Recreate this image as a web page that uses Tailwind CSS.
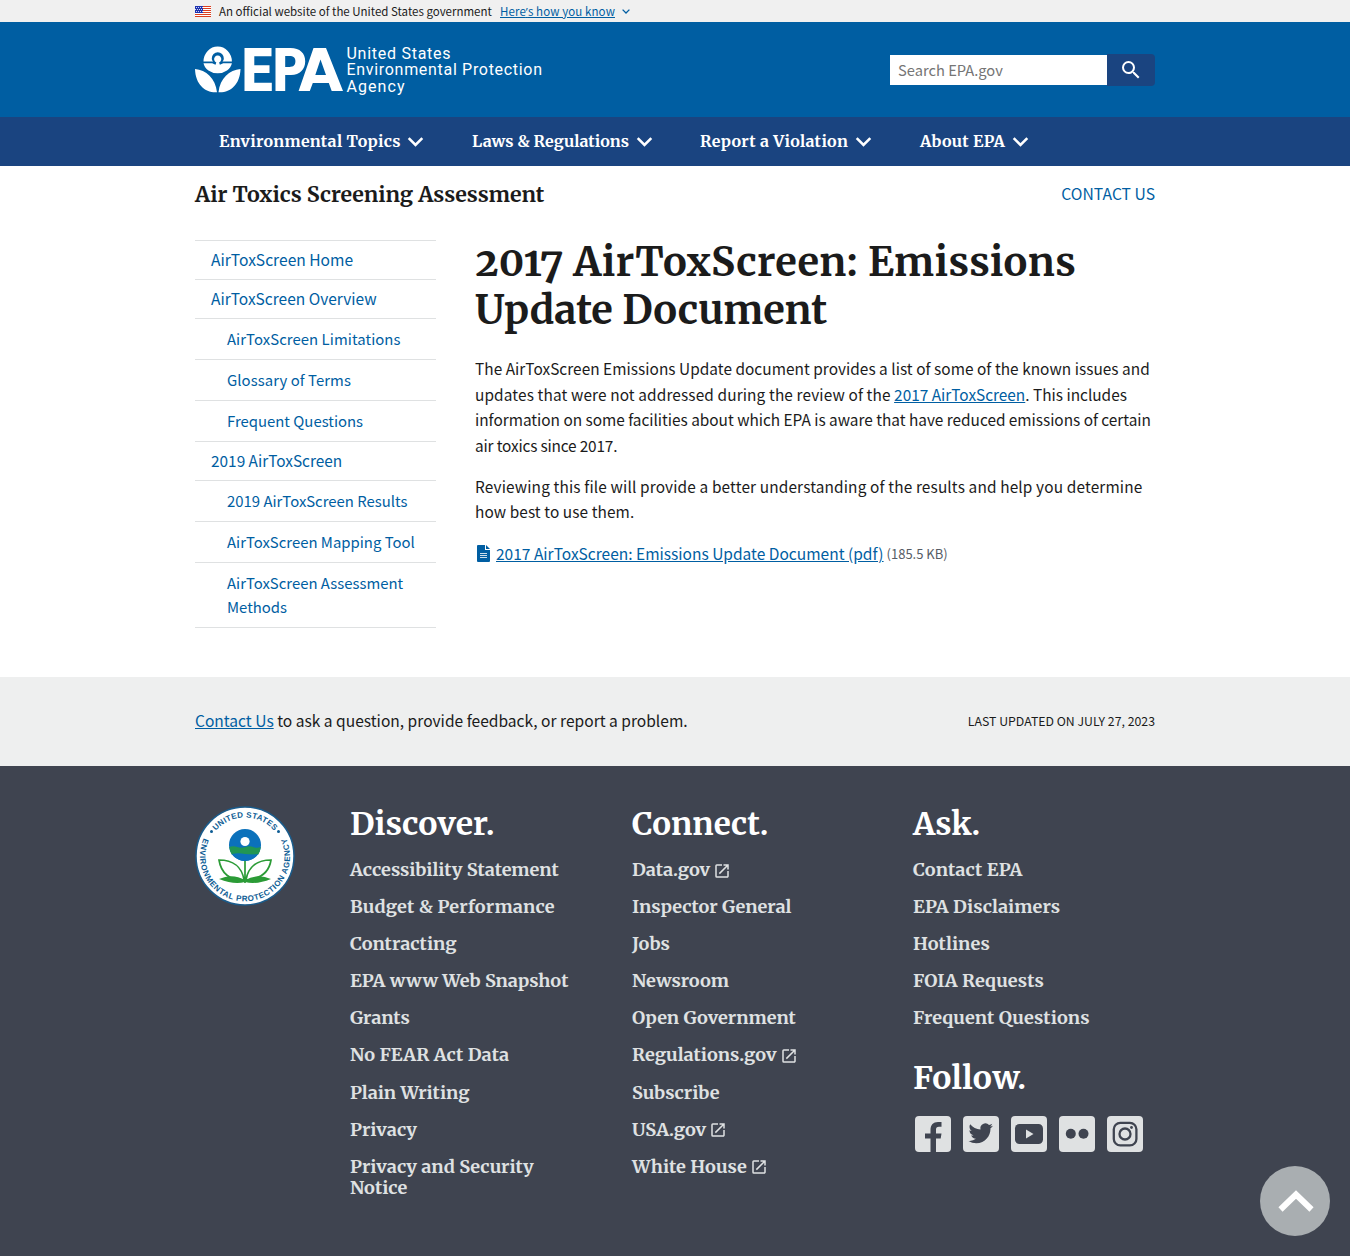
<!DOCTYPE html>
<html lang="en">
<head>
<meta charset="utf-8">
<title>2017 AirToxScreen: Emissions Update Document | US EPA</title>
<script src="https://cdn.jsdelivr.net/npm/@tailwindcss/browser@4"></script>
</head>
<body class="h-[1256px] overflow-hidden bg-white font-['Noto_Sans_CJK_SC','Open_Sans',sans-serif] text-[15.4px] leading-[25.6px] text-[#1b1b1b]">

<svg class="hidden">
  <symbol id="chev" viewBox="0 0 16 10"><path d="M1.2 1.2 8 8l6.800-6.800" fill="none" stroke="currentColor" stroke-width="2.600"/></symbol>
  <symbol id="ext" viewBox="0 0 24 24"><path fill="currentColor" d="M19 19H5V5h7V3H5a2 2 0 0 0-2 2v14a2 2 0 0 0 2 2h14c1.100 0 2-.9 2-2v-7h-2v7zM14 3v2h3.590l-9.830 9.830 1.410 1.410L19 6.410V10h2V3h-7z"/></symbol>
</svg>

<!-- Government banner -->
<div class="h-[22px] bg-[#f0f0f0]">
  <div class="mx-auto flex h-full w-[960px] items-center text-[11.5px] leading-[22px]">
    <svg class="mr-2 h-[11px] w-4" viewBox="0 0 16 11"><path fill="#fff" d="M0 0h16v11H0z"/><path stroke="#db3e1f" d="M0 .5h16M0 2.500h16M0 4.500h16M0 6.500h16M0 8.500h16M0 10.500h16"/><path fill="#1e33b1" d="M0 0h8v7H0z"/><path stroke="#fff" stroke-width=".8" stroke-dasharray="1 1" d="M1 1.500h7M0 3.500h8M1 5.500h7"/></svg>
    <span class="w-[273px] whitespace-nowrap">An official website of the United States government</span>
    <a class="ml-2 w-[116px] whitespace-nowrap tracking-[0.1px] text-[#005ea2] underline underline-offset-1">Here<span class="font-['Open_Sans',sans-serif]">’</span>s how you know</a>
    <svg class="ml-1.5 h-[5px] w-2 text-[#005ea2]"><use href="#chev"/></svg>
  </div>
</div>

<!-- Masthead -->
<header class="h-[95px] bg-[#005ea2]">
  <div class="mx-auto flex h-full w-[960px] items-center justify-between">
    <svg class="h-[54px] w-[350px]" viewBox="0 0 350 54" fill="#fff">
      <path d="M8.500 18.500a14.200 15 0 0 1 28.400 0H27.500c1-1.200 1.300-2 1.300-3.300a6 6 0 0 0-12 0c0 1.300.3 2.100 1.300 3.300z"/>
      <path d="M8.500 20.300h8.700l3.300 1.500.8-2.400a3.600 3.600 0 1 1 2.800 0l.8 2.400 3.300-1.500h8.700a14.400 12 0 0 1-28.400 0z"/>
      <path d="M0 26c11 1 20.500 9 22 23.200C10.500 50 .5 42 0 26zM45.500 26c-11 1-20.500 9-22 23.200 11.500.8 21.500-7.200 22-23.200z"/>
      <path d="M49.500 5h27v8.200H59.300v9h15.200V30H59.300v9.700h17.500V48H49.500z"/>
      <path fill-rule="evenodd" d="M80.500 5h15c9.500 0 14.700 5.300 14.700 13.200 0 8-5.200 13.700-14.200 13.700h-5.800V48h-9.700zm9.700 8v11h4.200c4 0 6-2 6-5.700 0-3.500-2-5.300-6-5.300z"/>
      <path fill-rule="evenodd" d="M118.500 5h12.500l17 43h-11.300l-2.900-8h-16l-3 8h-11.200zm7 11.500-5.200 15.500h10.700z"/>
      <g class="font-['Roboto',sans-serif]" font-size="16"><text x="151.500" y="15.500" textLength="104">United States</text><text x="151.500" y="32" textLength="195.500">Environmental Protection</text><text x="151.500" y="48.500" textLength="58">Agency</text></g>
    </svg>
    <div class="flex items-center">
      <div class="flex h-[30px] w-[217px] items-center bg-white px-2 text-[14.7px] text-[#757575]">Search EPA.gov</div>
      <div class="flex h-8 w-12 items-center justify-center rounded-r-[4px] bg-[#1a4480]">
        <svg class="size-6" viewBox="0 0 24 24"><path fill="#fff" d="M15.500 14h-.79l-.28-.27A6.471 6.471 0 0 0 16 9.500 6.500 6.500 0 1 0 9.500 16c1.610 0 3.090-.59 4.230-1.570l.27.28v.79l5 4.990L20.490 19l-4.990-5zm-6 0C7.010 14 5 11.990 5 9.500S7.010 5 9.500 5 14 7.010 14 9.500 11.990 14 9.500 14z"/></svg>
      </div>
    </div>
  </div>
</header>

<!-- Primary navigation -->
<nav class="h-[49px] bg-[#1a4480]">
  <div class="mx-auto flex h-[47px] w-[960px] items-center pl-6 font-['Merriweather','Noto_Serif',serif] text-base font-bold whitespace-nowrap text-white">
    <a class="flex w-[253px] items-center"><span class="w-[188px] tracking-[0.31px]">Environmental Topics</span><svg class="mt-0.5 h-2.5 w-[17px]"><use href="#chev"/></svg></a>
    <a class="flex w-[228px] items-center"><span class="w-[164px] tracking-[0.05px]">Laws &amp; Regulations</span><svg class="mt-0.5 h-2.5 w-[17px]"><use href="#chev"/></svg></a>
    <a class="flex w-[220px] items-center"><span class="w-[155px] tracking-[0.32px]">Report a Violation</span><svg class="mt-0.5 h-2.5 w-[17px]"><use href="#chev"/></svg></a>
    <a class="flex items-center"><span class="w-[92px] tracking-[0.28px]">About EPA</span><svg class="mt-0.5 h-2.5 w-[17px]"><use href="#chev"/></svg></a>
  </div>
</nav>

<div class="mx-auto flex h-[74px] w-[960px] justify-between pt-[15px]">
  <h2 class="pt-px font-['Merriweather','Noto_Serif',serif] text-[21.35px] leading-[26px] font-bold">Air Toxics Screening Assessment</h2>
  <a class="text-[15.7px] text-[#005ea2]">CONTACT US</a>
</div>

<div class="mx-auto flex h-[437px] w-[960px] gap-[39px]">
  <ul class="w-[241px] border-t border-[#dfe1e2] text-[14.9px] leading-6 whitespace-nowrap text-[#005ea2] *:border-b *:border-[#dfe1e2]">
    <li class="h-[39px] pt-[6px] pl-4 text-[15.6px]">AirToxScreen Home</li>
    <li class="h-[39px] pt-[6px] pl-4 text-[15.5px]">AirToxScreen Overview</li>
    <li class="py-2 pl-8 tracking-[0.06px]">AirToxScreen Limitations</li>
    <li class="py-2 pl-8 tracking-[0.06px]">Glossary of Terms</li>
    <li class="py-2 pl-8">Frequent Questions</li>
    <li class="h-[39px] pt-[6px] pl-4 text-[15.4px]">2019 AirToxScreen</li>
    <li class="py-2 pl-8">2019 AirToxScreen Results</li>
    <li class="py-2 pl-8">AirToxScreen Mapping Tool</li>
    <li class="py-2 pl-8">AirToxScreen Assessment<br>Methods</li>
  </ul>
  <main class="w-[680px] whitespace-nowrap">
    <h1 class="-mt-px font-['Merriweather','Noto_Serif',serif] text-[39.8px] leading-[47.500px] font-bold oldstyle-nums"><span class="tracking-[0.4px]">2017 AirToxScreen: Emissions</span><br><span class="tracking-[-0.05px]">Update Document</span></h1>
    <p class="mt-[22px]"><span class="tracking-[0.035px]">The AirToxScreen Emissions Update document provides a list of some of the known issues and</span><br><span class="tracking-[0.12px]">updates that were not addressed during the review of the</span> <a class="text-[#005ea2] underline underline-offset-1">2017 AirToxScreen</a>. This includes<br><span class="tracking-[-0.02px]">information on some facilities about which EPA is aware that have reduced emissions of certain</span><br><span class="tracking-[-0.17px]">air toxics since 2017.</span></p>
    <p class="mt-[15.500px]"><span class="tracking-[0.14px]">Reviewing this file will provide a better understanding of the results and help you determine</span><br><span class="tracking-[0.08px]">how best to use them.</span></p>
    <p class="mt-[15.500px] flex"><svg class="mt-1 mr-1.5 ml-0.5 h-[17px] w-[13px]" viewBox="0 0 13 17"><path fill="#005ea2" d="M1 0h7v5h5v11a1 1 0 0 1-1 1H1a1 1 0 0 1-1-1V1a1 1 0 0 1 1-1zM9 0l4 4H9z"/><path stroke="#fff" stroke-opacity=".8" d="M3 8.500h7M3 10.500h7M3 12.500h7"/></svg><a class="text-[15.53px] text-[#005ea2] underline underline-offset-1">2017 AirToxScreen: Emissions Update Document (pdf)</a><span class="ml-[3px] text-[13px] text-[#565c65]">(185.5 KB)</span></p>
  </main>
</div>

<div class="h-[89px] bg-[#eeefef]">
  <div class="mx-auto flex h-full w-[960px] items-center justify-between">
    <p class="-mt-0.5 text-[15.57px]"><a class="text-[#005ea2] underline underline-offset-1">Contact Us</a> to ask a question, provide feedback, or report a problem.</p>
    <p class="text-[12.3px]">LAST UPDATED ON JULY 27, 2023</p>
  </div>
</div>

<!-- Footer -->
<footer class="h-[490px] bg-[#3f4450] font-['Merriweather','Noto_Serif',serif] font-bold text-[#dfe1e2]">
  <div class="mx-auto flex w-[960px] pt-10">
    <div class="w-[155px]">
      <svg class="size-[100px]" viewBox="0 0 100 100">
        <circle cx="50" cy="50" r="49" fill="#fff" stroke="#1a5c8c" stroke-width="1.500"/>
        <path id="arcTop" fill="none" d="M11.500 50a38.500 38.500 0 0 1 77 0"/>
        <path id="arcBot" fill="none" d="M9.570 30.500A45 45 0 1 0 90.430 30.500"/>
        <g class="font-['Liberation_Sans',sans-serif]" fill="#0d5c94" font-size="8">
          <text text-anchor="middle" textLength="66"><textPath href="#arcTop" startOffset="50%">UNITED STATES</textPath></text>
          <text text-anchor="middle" textLength="178"><textPath href="#arcBot" startOffset="50%">ENVIRONMENTAL PROTECTION AGENCY</textPath></text>
        </g>
        <circle cx="16.500" cy="25.500" r="1.500" fill="#0d5c94"/><circle cx="83.500" cy="25.500" r="1.500" fill="#0d5c94"/>
        <circle cx="50" cy="39" r="16" fill="#0b71bb"/>
        <path fill="#219653" d="M34.300 41q4-1.500 8 0t8 0 8 0 7.400 0a16 16 0 0 1-2.400 7.500H36.700A16 16 0 0 1 34.300 41z"/>
        <path fill="#0b71bb" d="M36.800 48q6.500-1.500 13 0t13.400 0a16 16 0 0 1-26.400 0z"/>
        <circle cx="50" cy="35.500" r="4.600" fill="#fff"/>
        <g fill="none" stroke="#2b9b36" stroke-width="1.700"><path d="M50 55v22M49 74C35 75 26 67 24 54c14 0 23 7 25 20zM51 74c14-1 23-7 25-20-14 0-23 7-25 20z"/></g>
        <path fill="#2b9b36" d="M24 73q14-6 26 1.500Q62 67 76 73q-15 6-26 3-11 3-26-3z"/>
      </svg>
    </div>
    <div class="w-[282px]">
      <h3 class="text-[32.1px] leading-9 text-white">Discover.</h3>
      <ul class="mt-[17px] space-y-4 text-[18.1px] leading-[21.1px] *:whitespace-nowrap">
        <li>Accessibility Statement</li><li class="tracking-[0.17px]">Budget &amp; Performance</li><li>Contracting</li><li>EPA www Web Snapshot</li><li>Grants</li><li class="tracking-[0.1px]">No FEAR Act Data</li><li>Plain Writing</li><li>Privacy</li><li>Privacy and Security<br>Notice</li>
      </ul>
    </div>
    <div class="w-[281px]">
      <h3 class="text-[31.4px] leading-9 text-white">Connect.</h3>
      <ul class="mt-[17px] space-y-4 text-[18.1px] leading-[21.1px] *:flex *:items-center *:gap-[3px]">
        <li>Data.gov <svg class="mt-0.5 size-[18px]"><use href="#ext"/></svg></li><li>Inspector General</li><li>Jobs</li><li>Newsroom</li><li>Open Government</li>
        <li>Regulations.gov <svg class="mt-0.5 size-[18px]"><use href="#ext"/></svg></li><li>Subscribe</li><li>USA.gov <svg class="mt-0.5 size-[18px]"><use href="#ext"/></svg></li><li class="tracking-[0.1px]">White House <svg class="mt-0.5 size-[18px]"><use href="#ext"/></svg></li>
      </ul>
    </div>
    <div>
      <h3 class="text-[31.5px] leading-9 text-white">Ask.</h3>
      <ul class="mt-[17px] space-y-4 text-[18.1px] leading-[21.1px] tracking-[0.1px]">
        <li>Contact EPA</li><li>EPA Disclaimers</li><li>Hotlines</li><li>FOIA Requests</li><li>Frequent Questions</li>
      </ul>
      <h3 class="mt-8 text-[32px] leading-9 tracking-[0.35px] text-white">Follow.</h3>
      <div class="mt-5 ml-0.5 flex gap-3 text-[#3f4450] *:size-9 *:rounded-[4px] *:bg-[#dfe1e2]">
        <svg viewBox="0 0 36 36" fill="currentColor"><path d="M15.500 36V22.500H10v-5h5.500V14c0-5.300 2.800-8 7.500-8h3.500v4.800H24c-2.300 0-3 1-3 3v3.700h5.500l-.8 5H21V36z"/></svg>
        <svg viewBox="0 0 36 36" fill="currentColor"><g transform="translate(5.500 5)scale(1.020)"><path d="M23.950 4.570a10 10 0 0 1-2.820.77 4.960 4.960 0 0 0 2.160-2.720c-.95.550-2 .95-3.130 1.180a4.920 4.920 0 0 0-8.380 4.480C7.690 8.090 4.070 6.130 1.640 3.160a4.820 4.820 0 0 0-.67 2.480c0 1.710.87 3.210 2.190 4.100a4.900 4.900 0 0 1-2.230-.62v.06a4.920 4.920 0 0 0 3.950 4.830 5 5 0 0 1-2.210.080 4.940 4.940 0 0 0 4.600 3.420A9.870 9.870 0 0 1 0 19.540a13.990 13.990 0 0 0 7.550 2.210c9.050 0 14-7.500 14-13.980 0-.21 0-.42-.02-.63a9.940 9.940 0 0 0 2.420-2.570z"/></g></svg>
        <svg viewBox="0 0 36 36"><rect x="4" y="8" width="28" height="20" rx="4.500" fill="currentColor"/><path fill="#dfe1e2" d="m15 13.500 7.500 4.500-7.500 4.500z"/></svg>
        <svg viewBox="0 0 36 36" fill="currentColor"><circle cx="11.800" cy="17.800" r="5"/><circle cx="24.500" cy="17.800" r="5"/></svg>
        <svg viewBox="0 0 36 36" fill="none" stroke="currentColor" stroke-width="2.300"><rect x="6.800" y="6.800" width="22.600" height="22.600" rx="6.500"/><circle cx="18" cy="18" r="5.500"/><circle cx="24.500" cy="11.500" r="1.400" fill="currentColor" stroke="none"/></svg>
      </div>
    </div>
  </div>
</footer>

<!-- Back to top -->
<a class="fixed right-5 bottom-5 flex size-[70px] items-center justify-center rounded-full bg-[#a9aeb1]">
  <svg class="size-[70px]" viewBox="0 0 70 70"><path d="M20.500 43.500 36 28.500l15.500 15" fill="none" stroke="#fff" stroke-width="6"/></svg>
</a>
</body>
</html>
